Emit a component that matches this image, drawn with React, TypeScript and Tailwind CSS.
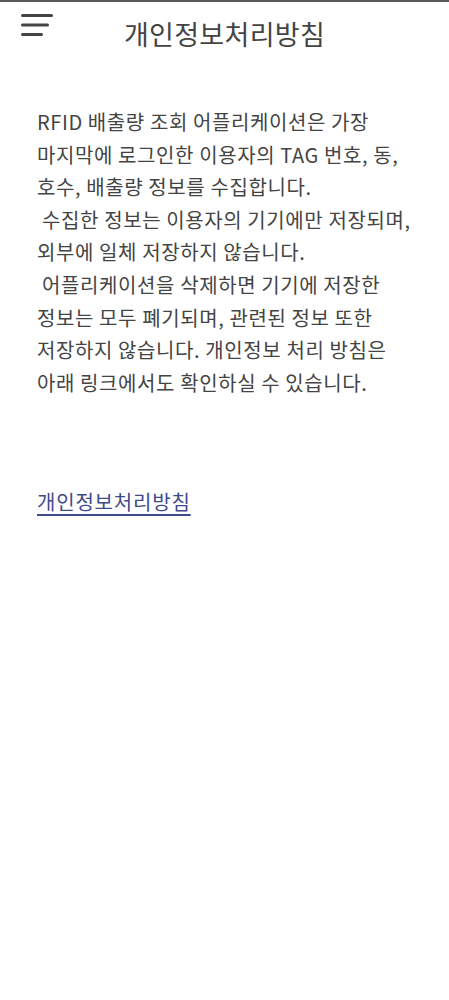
import React from 'react';

const lines = [
  'RFID 배출량 조회 어플리케이션은 가장',
  '마지막에 로그인한 이용자의 TAG 번호, 동,',
  '호수, 배출량 정보를 수집합니다.',
  ' 수집한 정보는 이용자의 기기에만 저장되며,',
  '외부에 일체 저장하지 않습니다.',
  ' 어플리케이션을 삭제하면 기기에 저장한',
  '정보는 모두 폐기되며, 관련된 정보 또한',
  '저장하지 않습니다. 개인정보 처리 방침은',
  '아래 링크에서도 확인하실 수 있습니다.',
];

function MenuIcon() {
  return (
    <svg width="34" height="26" viewBox="0 0 34 26" className="block">
      <rect x="0" y="1" width="32" height="3" rx="1.5" fill="#444" />
      <rect x="0" y="10.5" width="28" height="3" rx="1.5" fill="#444" />
      <rect x="0" y="20" width="22" height="3" rx="1.5" fill="#444" />
    </svg>
  );
}

export default function App() {
  return (
    <div
      className="min-h-screen bg-white border-t-2 border-[#5a5a5a] text-[#444]"
      style={{ fontFamily: '"Noto Sans CJK KR", "Noto Sans", sans-serif' }}
    >
      <header className="relative flex items-center justify-center h-[64px]">
        <button className="absolute left-[21px] top-[11px]">
          <MenuIcon />
        </button>
        <h1 className="text-[27px] font-normal tracking-[0.3px] text-[#444]">개인정보처리방침</h1>
      </header>

      <main className="px-[37px] pt-[40px]">
        <p className="text-[20px] leading-[32.6px] whitespace-pre tracking-[0.6px]">
          {lines.map((l, i) => (
            <span key={i} className="block">
              {l}
            </span>
          ))}
        </p>

        <a
          href="#"
          className="inline-block mt-[88px] text-[20px] text-[#3f4a8a] underline underline-offset-[4px] tracking-[0.8px]"
        >
          개인정보처리방침
        </a>
      </main>
    </div>
  );
}
